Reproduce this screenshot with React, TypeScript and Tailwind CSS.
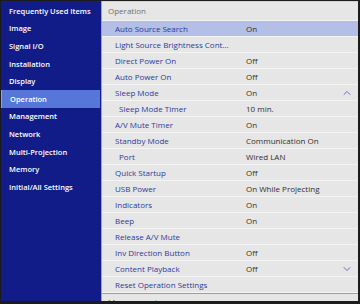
import { ChevronUp, ChevronDown } from 'lucide-react';

type Row = {
  label: string;
  value?: string;
  indent?: boolean;
  active?: boolean;
  chevron?: 'up' | 'down';
};

const menu = [
  'Frequently Used Items',
  'Image',
  'Signal I/O',
  'Installation',
  'Display',
  'Operation',
  'Management',
  'Network',
  'Multi-Projection',
  'Memory',
  'Initial/All Settings',
];

const rows: Row[] = [
  { label: 'Auto Source Search', value: 'On', active: true },
  { label: 'Light Source Brightness Control' },
  { label: 'Direct Power On', value: 'Off' },
  { label: 'Auto Power On', value: 'Off' },
  { label: 'Sleep Mode', value: 'On', chevron: 'up' },
  { label: 'Sleep Mode Timer', value: '10 min.', indent: true },
  { label: 'A/V Mute Timer', value: 'On' },
  { label: 'Standby Mode', value: 'Communication On' },
  { label: 'Port', value: 'Wired LAN', indent: true },
  { label: 'Quick Startup', value: 'Off' },
  { label: 'USB Power', value: 'On While Projecting' },
  { label: 'Indicators', value: 'On' },
  { label: 'Beep', value: 'On' },
  { label: 'Release A/V Mute' },
  { label: 'Inv Direction Button', value: 'Off' },
  { label: 'Content Playback', value: 'Off', chevron: 'down' },
  { label: 'Reset Operation Settings' },
];

function SettingRow({ row }: { row: Row }) {
  return (
    <div
      className={`flex items-center h-4 shrink-0 border-b border-[#f4f4f4] ${
        row.active ? 'bg-[#b3bfe6]' : 'bg-[#e6e6e6]'
      }`}
    >
      <div
        className={`w-[144px] shrink-0 ${row.indent ? 'pl-[17px]' : 'pl-[13px]'}`}
      >
        <div className="max-w-[115px] truncate leading-[12px] text-[8px] text-[#2b3aa0] font-medium">
          {row.label}
        </div>
      </div>
      <span className="flex-grow text-[8px] leading-[12px] text-[#303030]">{row.value}</span>
      {row.chevron === 'up' && <ChevronUp className="h-3 w-3 mr-[5px] text-[#3a4ab0]" strokeWidth={1.5} />}
      {row.chevron === 'down' && <ChevronDown className="h-3 w-3 mr-[5px] text-[#3a4ab0]" strokeWidth={1.5} />}
    </div>
  );
}

export default function App() {
  return (
    <div
      className="w-[360px] h-[304px] bg-[#1c1c1c] pt-px pl-px pr-[2px] pb-[3px] flex text-[7.5px] leading-[12px]"
      style={{ fontFamily: '"Open Sans", "Noto Sans", sans-serif' }}
    >
      <div className="w-[100px] shrink-0 bg-[#111c88] pt-[1px] pr-px">
        {menu.map((item) => (
          <div
            key={item}
            className={`h-[17.6px] flex items-center pl-[8px] text-white font-semibold ${
              item === 'Operation' ? 'bg-[#5676d9] border-l border-[#8ea3e8]' : ''
            }`}
          >
            {item}
          </div>
        ))}
      </div>
      <div className="w-px bg-[#9aa0b8]" />
      <div className="flex-grow bg-[#e6e6e6] overflow-hidden flex flex-col">
        <div className="h-[20px] flex items-center pl-[6px] text-[8px] text-[#707070] border-t border-[#c9cdf0] border-b border-b-[#f4f4f4] shrink-0">
          Operation
        </div>
        {rows.map((row) => (
          <SettingRow key={row.label} row={row} />
        ))}
        <div className="h-px bg-[#8f9bd6] shrink-0" />
        <div className="pl-[6px] pt-[2px] shrink-0 text-[8px] text-[#707070]">Management</div>
      </div>
    </div>
  );
}
